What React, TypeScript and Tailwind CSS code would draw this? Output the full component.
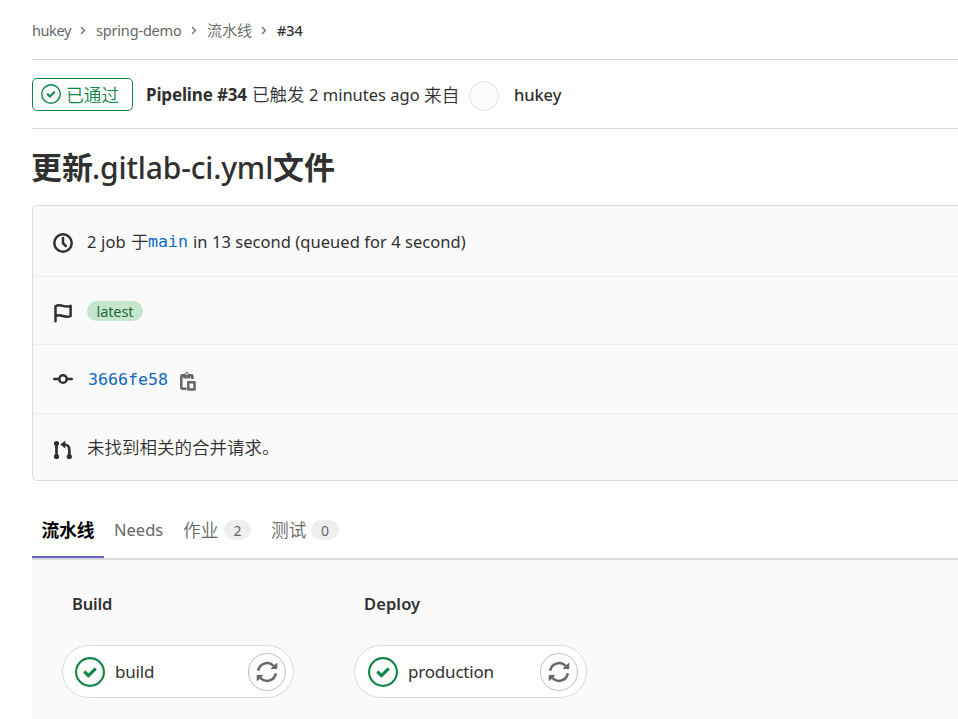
import type { ReactNode } from "react";

const sans = "font-['Noto_Sans','Noto_Sans_CJK_SC',sans-serif]";
const cjk = "font-['Noto_Sans_CJK_SC',sans-serif]";

function Check({ size, stroke }: { size: number; stroke: number }) {
  return (
    <svg width={size} height={size} viewBox="0 0 14 14" className="shrink-0 text-[#108548]">
      <circle cx="7" cy="7" r={7 - stroke / 2} fill="white" stroke="currentColor" strokeWidth={stroke} />
      <path
        fill="currentColor"
        d="M6.278 7.697L5.045 6.464a.296.296 0 0 0-.42-.002l-.613.614a.298.298 0 0 0 .002.42l1.91 1.909a.5.5 0 0 0 .703.005l.265-.265L9.997 6.04a.291.291 0 0 0-.009-.408l-.614-.614a.29.29 0 0 0-.408-.009L6.278 7.697z"
      />
    </svg>
  );
}

function Chevron() {
  return (
    <svg width="6" height="9" viewBox="0 0 6 9" className="shrink-0 text-[#737373]" fill="none" stroke="currentColor" strokeWidth="1.4">
      <path d="M1 1l3.4 3.5L1 8" />
    </svg>
  );
}

function Retry() {
  return (
    <svg width="22" height="22" viewBox="0 0 22 22" fill="none" stroke="#666666" strokeWidth="2.5">
      <path d="M2.2 9.8A9 9 0 0 1 17.5 4.8" />
      <path d="M19.8 12.2A9 9 0 0 1 4.5 17.2" />
      <path d="M20.8 2.4v5.2h-5.6z" fill="#666666" strokeWidth="1" strokeLinejoin="round" />
      <path d="M1.2 19.6v-5.2h5.6z" fill="#666666" strokeWidth="1" strokeLinejoin="round" />
    </svg>
  );
}

function InfoRow({ icon, className, children }: { icon: ReactNode; className: string; children: ReactNode }) {
  return (
    <div className={`flex items-center pl-5 ${className}`}>
      <div className="w-[34px] shrink-0 text-[#303030]">{icon}</div>
      {children}
    </div>
  );
}

function Stage({ title, job, className, titleClass, pillClass }: { title: string; job: string; className: string; titleClass: string; pillClass: string }) {
  return (
    <div className={`shrink-0 ${className}`}>
      <div className={`ml-[10px] h-[24px] text-[16.5px] leading-[24px] font-semibold ${titleClass}`}>{title}</div>
      <div className={`mt-[29px] flex h-[53px] items-center rounded-full border border-[#dbdbdb] bg-white ${pillClass}`}>
        <Check size={30} stroke={1} />
        <span className="ml-[10px] text-[17px] tracking-[-0.2px]">{job}</span>
        <span className="ml-auto flex size-[38px] items-center justify-center rounded-full border border-[#bfbfbf]">
          <Retry />
        </span>
      </div>
    </div>
  );
}

export default function App() {
  return (
    <div className={`h-[719px] w-[958px] overflow-hidden bg-white pl-8 text-[17px] whitespace-nowrap text-[#303030] ${sans}`}>
      <nav className="flex h-[60px] items-center border-b border-[#dbdbdb] pt-[2px] text-[14.5px] text-[#666666]">
        <span className="w-[48px] tracking-[-0.4px]">hukey</span>
        <Chevron />
        <span className="ml-[10px] w-[95px] tracking-[-0.18px]">spring-demo</span>
        <Chevron />
        <span className={`ml-[10px] w-[54px] text-[15px] font-[350] ${cjk}`}>流水线</span>
        <Chevron />
        <span className="ml-[10px] font-medium tracking-[-0.1px] text-[#303030]">#34</span>
      </nav>

      <header className="flex h-[69px] items-center border-b border-[#dbdbdb] pt-px">
        <span className="mr-[13px] -mt-px flex h-[33px] w-[101px] items-center rounded-[5px] border border-[#108548] pl-[8px] text-[#108548]">
          <Check size={20} stroke={1} />
          <span className={`ml-[5px] text-[17.7px] font-[350] ${cjk}`}>已通过</span>
        </span>
        <strong className="w-[106px] text-[17px] font-bold tracking-[-0.15px]">Pipeline #34</strong>
        <span className={`-mt-px w-[57px] text-[17.5px] font-[350] ${cjk}`}>已触发</span>
        <span className="w-[115px] pt-px text-[16.5px]">2 minutes ago</span>
        <span className={`-mt-px w-[45px] text-[17.7px] font-[350] ${cjk}`}>来自</span>
        <span className="mt-[2px] size-[30px] rounded-full border border-[#e3e3e3] bg-[#fbfbfb]" />
        <span className="ml-[15px] pt-px text-[16.5px] font-medium tracking-[-0.1px]">hukey</span>
      </header>

      <h1 className="flex h-[76px] items-center text-[30px] leading-none">
        <span className={`-mt-[4px] -ml-px w-[61px] text-[31px] font-bold ${cjk}`}>更新</span>
        <span className="w-[181px] pt-px text-[30px] font-medium tracking-[-0.15px]">.gitlab-ci.yml</span>
        <span className={`-mt-[4px] text-[31px] font-bold ${cjk}`}>文件</span>
      </h1>

      <section className="h-[276px] rounded-l-[5px] border border-r-0 border-[#dbdbdb] bg-[#fafafa]">
        <InfoRow
          className="h-[71px] border-b border-[#eeeeee] pt-[2px]"
          icon={
            <svg width="20" height="20" viewBox="0 0 20 20" fill="none" stroke="currentColor" strokeWidth="2.5" className="mt-px">
              <circle cx="10" cy="10" r="8.7" />
              <path d="M10 5v5.2l2.8 2.8" strokeLinecap="round" />
            </svg>
          }
        >
          <span className="w-[44px] text-[16.5px] tracking-[0.15px]">2 job</span>
          <span className={`-mt-px w-[17px] text-[17.5px] font-[350] ${cjk}`}>于</span>
          <span className="w-[45px] pt-px font-['DejaVu_Sans_Mono',monospace] text-[16.6px] text-[#1068bf]">main</span>
          <span className="text-[16.5px] tracking-[0.05px]">in 13 second (queued for 4 second)</span>
        </InfoRow>
        <InfoRow
          className="h-[68px] border-b border-[#eeeeee]"
          icon={
            <svg width="20" height="20" viewBox="0 0 20 20" fill="none" stroke="currentColor" strokeWidth="2.5" className="mt-[4px]">
              <path d="M2.5 18.2V3.2M2.5 3.2C8-.2 11 5.6 17.6 2.9v10.2C11 15.8 8 10 2.5 13.2" strokeLinecap="round" strokeLinejoin="round" />
            </svg>
          }
        >
          <span className="flex h-[20px] w-[56px] items-center justify-center rounded-full bg-[#c3e6cd] pt-[2px] text-[14.5px] tracking-[-0.1px] text-[#24663b]">latest</span>
        </InfoRow>
        <InfoRow
          className="h-[69px] border-b border-[#eeeeee]"
          icon={
            <svg width="20" height="20" viewBox="0 0 20 20" fill="none" stroke="currentColor" strokeWidth="2.5">
              <circle cx="10" cy="10" r="3.8" />
              <path d="M1.2 10h5M13.8 10h5" strokeLinecap="round" />
            </svg>
          }
        >
          <span className="w-[93px] pt-[2px] pl-px font-['DejaVu_Sans_Mono',monospace] text-[16.6px] text-[#1068bf]">3666fe58</span>
          <svg width="16" height="20" viewBox="0 0 16 20" className="mt-[4px] shrink-0" fill="none" stroke="#666666" strokeWidth="2.5">
            <path d="M6.5 17.7H2.2a.9.9 0 0 1-.9-.9V5.2a.9.9 0 0 1 .9-.9H4M9.5 4.3h2a.9.9 0 0 1 .9.9V8" />
            <path d="M3.6 7V3.6h1.5L6.8 1l1.7 2.6H10V7z" fill="#666666" strokeWidth="1" strokeLinejoin="round" />
            <path d="M8.3 11.3h6.2v7.2H8.3z" strokeLinejoin="round" />
            <circle cx="6.8" cy="3.2" r=".9" fill="#fafafa" stroke="none" />
          </svg>
        </InfoRow>
        <InfoRow
          className="h-[66px]"
          icon={
            <svg width="20" height="20" viewBox="0 0 20 20" className="mt-[5px]" fill="none" stroke="currentColor" strokeWidth="2.7">
              <path d="M3.5 3.5v13M16.3 16.5V9.5a5 5 0 0 0-5-5H10" />
              <g fill="currentColor" stroke="none">
                <circle cx="3.5" cy="3.5" r="2.6" />
                <circle cx="3.5" cy="16.5" r="2.6" />
                <circle cx="16.3" cy="16.5" r="2.6" />
                <path d="M12.3 .5v8L7.2 4.5z" />
              </g>
            </svg>
          }
        >
          <span className={`text-[17.5px] font-[350] ${cjk}`}>未找到相关的合并请求。</span>
        </InfoRow>
      </section>

      <nav className="flex h-[79px] border-b-2 border-[#dbdbdb] pt-[20px] text-[#666666]">
        <span className={`flex h-[57px] w-[72px] items-center justify-center border-b-2 border-[#6666c4] pt-[2px] text-[17.7px] font-bold text-black ${cjk}`}>流水线</span>
        <span className="ml-[10px] flex h-[57px] w-[69px] items-center pt-px text-[16.5px]">Needs</span>
        <span className={`flex h-[57px] w-[41px] items-center text-[17.7px] font-[350] ${cjk}`}>作业</span>
        <span className="mt-[19px] flex h-[20px] w-[27px] items-center justify-center rounded-full bg-[#eeeeee] text-[14px]">2</span>
        <span className={`ml-[20px] flex h-[57px] w-[40px] items-center text-[17.7px] font-[350] ${cjk}`}>测试</span>
        <span className="mt-[19px] flex h-[20px] w-[28px] items-center justify-center rounded-full bg-[#eeeeee] text-[14px]">0</span>
      </nav>

      <main className="flex h-[159px] gap-[60px] bg-[#fafafa] pt-[32px] pl-[30px]">
        <Stage title="Build" job="build" className="w-[232px]" titleClass="tracking-[-0.2px]" pillClass="pr-[7px] pl-[12px]" />
        <Stage title="Deploy" job="production" className="w-[233px]" titleClass="tracking-[0.1px]" pillClass="pr-[8px] pl-[13px]" />
      </main>
    </div>
  );
}
